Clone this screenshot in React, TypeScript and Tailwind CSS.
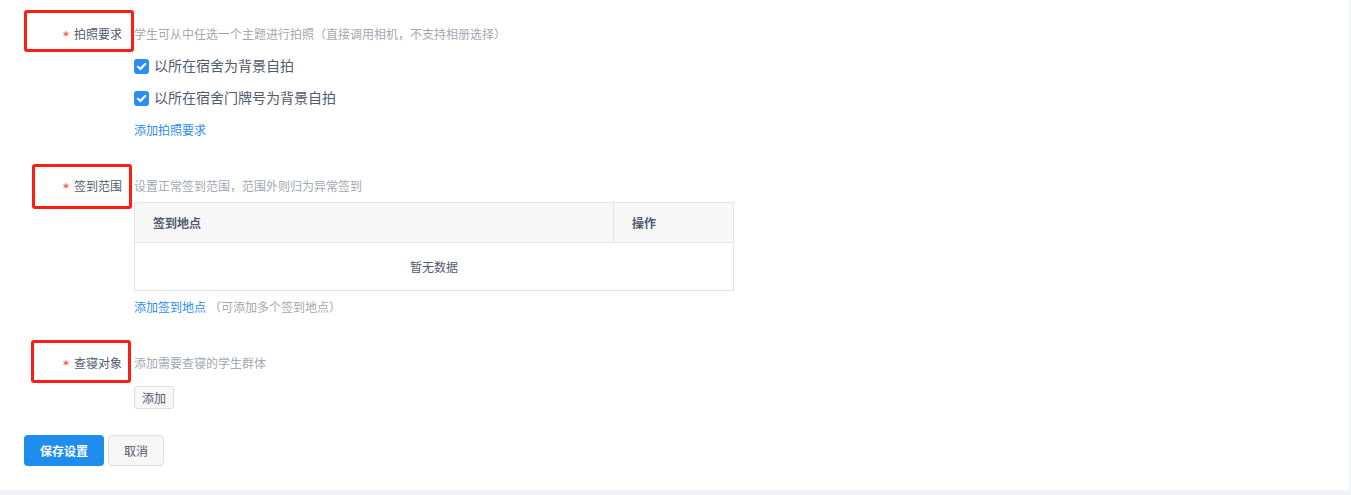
import React from "react";

const font = { fontFamily: '"Noto Sans CJK SC", "Noto Sans", sans-serif' };

function Check({ label }: { label: string }) {
  return (
    <div className="h-[32px] flex items-center">
      <span className="w-[15px] h-[15px] rounded-[3px] bg-[#2b8ef0] flex items-center justify-center">
        <svg width="11" height="11" viewBox="0 0 10 10">
          <path d="M1.8 5.2 L4 7.3 L8.3 2.8" fill="none" stroke="#fff" strokeWidth="2" strokeLinecap="round" strokeLinejoin="round" />
        </svg>
      </span>
      <span className="ml-[5px] text-[14px] text-[#515a6e] relative top-[-1px]">{label}</span>
    </div>
  );
}

function Label({ text }: { text: string }) {
  return (
    <div className="w-[134px] pr-[12px] flex items-center justify-end text-[12px] text-[#515a6e]">
      <span
        className="text-[#ed3f14] mr-[5px] text-[12px] relative top-[2px] font-['DejaVu_Sans',sans-serif]"
      >
        *
      </span>
      {text}
    </div>
  );
}

export default function App() {
  return (
    <div className="w-[1351px] h-[495px] bg-[#f0f2f5] overflow-hidden" style={font}>
      <div className="relative w-[1349px] h-[490px] bg-white pt-[22px]">
        {/* row 1 */}
        <div className="flex h-[24px]">
          <Label text="拍照要求" />
          <div className="flex items-center text-[12px] text-[#a3a8b0]">
            学生可从中任选一个主题进行拍照（直接调用相机，不支持相册选择）
          </div>
        </div>
        <div className="pl-[134px] pt-[4px]">
          <Check label="以所在宿舍为背景自拍" />
          <Check label="以所在宿舍门牌号为背景自拍" />
          <div className="h-[32px] flex items-center text-[12px] text-[#2d8cf0]">添加拍照要求</div>
        </div>

        {/* row 2 */}
        <div className="flex h-[24px] mt-[28px]">
          <Label text="签到范围" />
          <div className="flex items-center text-[12px] text-[#a3a8b0]">
            设置正常签到范围，范围外则归为异常签到
          </div>
        </div>
        <div className="pl-[134px] mt-[4px]">
          <div className="w-[600px] border border-[#e3e5e8] text-[12px]">
            <div className="flex h-[40px] bg-[#f7f7f8] border-b border-[#e3e5e8]">
              <div className="w-[479px] border-r border-[#e3e5e8] flex items-center pl-[18px] font-semibold text-[#515a6e]">签到地点</div>
              <div className="flex-1 flex items-center pl-[18px] font-semibold text-[#515a6e]">操作</div>
            </div>
            <div className="h-[47px] flex items-center justify-center text-[#515a6e]">暂无数据</div>
          </div>
          <div className="h-[24px] mt-[4px] flex items-center text-[12px]">
            <span className="text-[#2d8cf0]">添加签到地点</span>
            <span className="text-[#a3a8b0] ml-[3px]">（可添加多个签到地点）</span>
          </div>
        </div>

        {/* row 3 */}
        <div className="flex h-[24px] mt-[32px]">
          <Label text="查寝对象" />
          <div className="flex items-center text-[12px] text-[#a3a8b0]">添加需要查寝的学生群体</div>
        </div>
        <div className="pl-[134px] mt-[11px]">
          <button className="h-[23px] px-[7px] border border-[#dcdee2] rounded-[3px] bg-[#f7f7f7] text-[12px] text-[#515a6e] flex items-center">
            添加
          </button>
        </div>

        <div className="flex pl-[24px] mt-[26px] gap-[4px]">
          <button className="w-[80px] h-[31px] rounded-[4px] bg-[#1e8ded] text-white text-[12px] font-semibold flex items-center justify-center">
            保存设置
          </button>
          <button className="w-[56px] h-[31px] rounded-[4px] border border-[#dcdee2] bg-[#f7f7f7] text-[#515a6e] text-[12px] flex items-center justify-center">
            取消
          </button>
        </div>

        {/* annotation boxes */}
        <div className="absolute left-[24px] top-[10px] w-[110px] h-[42px] border-[3px] border-[#ff1c12] rounded-[3px]" />
        <div className="absolute left-[32px] top-[164px] w-[100px] h-[45px] border-[3px] border-[#ff1c12] rounded-[3px]" />
        <div className="absolute left-[31px] top-[340px] w-[100px] h-[43px] border-[3px] border-[#ff1c12] rounded-[3px]" />
      </div>
    </div>
  );
}
